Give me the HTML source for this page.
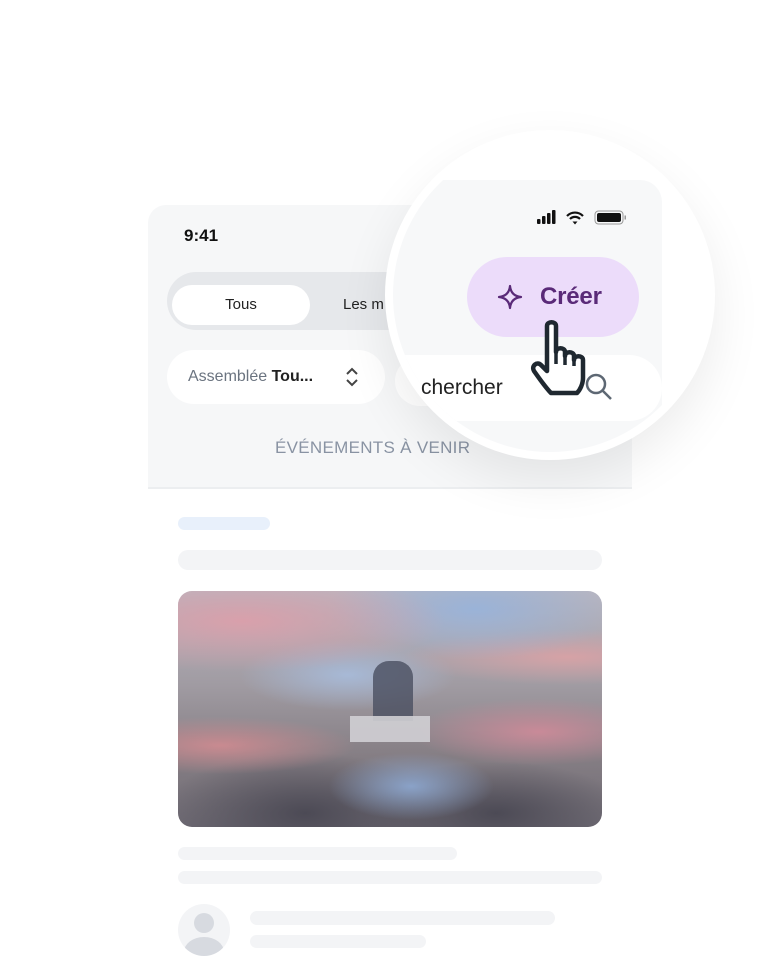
<!DOCTYPE html><html><head><style>
body{margin:0;width:780px;height:976px;background:#fff;position:relative;overflow:hidden;font-family:"Liberation Sans",sans-serif}
.a{position:absolute}
.sk{position:absolute;background:#f3f4f6;border-radius:8px}
</style></head><body>
<div class="a" style="left:148px;top:205px;width:484px;height:282px;background:#f6f7f8;border-radius:18px 18px 0 0;border-bottom:2px solid #eceef0"></div>
<div class="a" style="left:184px;top:226px;font-size:17px;font-weight:bold;color:#111">9:41</div>
<div class="a" style="left:167px;top:272px;width:278px;height:58px;background:#e6e8eb;border-radius:29px"></div>
<div class="a" style="left:172px;top:285px;width:138px;height:40px;background:#fff;border-radius:20px;text-align:center;line-height:40px;font-size:15px;color:#222">Tous</div>
<div class="a" style="left:343px;top:296px;font-size:15px;color:#222">Les m</div>
<div class="a" style="left:167px;top:350px;width:218px;height:54px;background:#fff;border-radius:27px"></div>
<div class="a" style="left:188px;top:368px;font-size:16px;color:#6b7480">Assemblée <span style="color:#222;font-weight:bold">Tou...</span></div>
<svg class="a" style="left:343px;top:366px" width="18" height="22"><path d="M4 8l5-5 5 5M4 14l5 5 5-5" stroke="#444" stroke-width="2" fill="none"/></svg>
<div class="a" style="left:395px;top:356px;width:100px;height:50px;background:#fff;border-radius:25px"></div>
<div class="a" style="left:275px;top:438px;font-size:17px;color:#8993a3;letter-spacing:.3px">ÉVÉNEMENTS À VENIR</div>
<div class="sk" style="left:178px;top:517px;width:92px;height:13px;background:#e8f0fb"></div>
<div class="sk" style="left:178px;top:550px;width:424px;height:20px;border-radius:10px"></div>
<div class="a" style="left:178px;top:591px;width:424px;height:236px;border-radius:14px;overflow:hidden;background:linear-gradient(180deg,#b9b6c0 0%,#a09ba2 40%,#857e84 70%,#6f6b74 100%)">
<div class="a" style="left:0;top:0;width:424px;height:120px;background:radial-gradient(ellipse at 15% 25%,#d9a0ab 0,transparent 40%),radial-gradient(ellipse at 70% 15%,#9ab3d8 0,transparent 35%),radial-gradient(ellipse at 92% 55%,#d6a2a6 0,transparent 30%),radial-gradient(ellipse at 40% 70%,#a7b9d6 0,transparent 30%)"></div>
<div class="a" style="left:0;top:100px;width:424px;height:136px;background:radial-gradient(ellipse at 10% 40%,#c98a90 0,transparent 25%),radial-gradient(ellipse at 55% 70%,#8aa2c8 0,transparent 25%),radial-gradient(ellipse at 85% 30%,#c98a98 0,transparent 25%),radial-gradient(ellipse at 30% 90%,#4c4a55 0,transparent 35%),radial-gradient(ellipse at 75% 90%,#4c4a55 0,transparent 30%)"></div>
<div class="a" style="left:195px;top:70px;width:40px;height:60px;background:#4a4f60;border-radius:16px 16px 0 0;opacity:.8"></div>
<div class="a" style="left:172px;top:125px;width:80px;height:26px;background:#d0cfd4;opacity:.9"></div>
</div>
<div class="sk" style="left:178px;top:847px;width:279px;height:13px;border-radius:7px"></div>
<div class="sk" style="left:178px;top:871px;width:424px;height:13px;border-radius:7px"></div>
<div class="a" style="left:178px;top:904px;width:52px;height:52px;border-radius:50%;background:#f3f4f6;overflow:hidden">
<div class="a" style="left:16px;top:9px;width:20px;height:20px;border-radius:50%;background:#d7dae0"></div>
<div class="a" style="left:6px;top:33px;width:40px;height:30px;border-radius:50%;background:#d7dae0"></div></div>
<div class="sk" style="left:250px;top:911px;width:305px;height:14px;border-radius:7px"></div>
<div class="sk" style="left:250px;top:935px;width:176px;height:13px;border-radius:7px"></div>
<!-- magnifier -->
<div class="a" style="left:385px;top:130px;width:330px;height:330px;border-radius:50%;background:#fff;box-shadow:0 20px 50px rgba(0,0,0,.08);overflow:hidden">
<div class="a" style="left:8px;top:8px;width:314px;height:314px;border-radius:50%;overflow:hidden">
<div class="a" style="left:-20px;top:42px;width:289px;height:300px;background:#f7f8f9;border-radius:0 22px 0 0"></div>
<div class="a" style="left:-20px;top:217px;width:289px;height:66px;background:#fff;border-radius:33px"></div>
</div>
<div class="a" style="left:82px;top:127px;width:172px;height:80px;background:#ecdcfa;border-radius:40px"></div>
<div class="a" style="left:155px;top:153px;font-size:24px;color:#5a2a78;font-weight:bold;letter-spacing:-.2px">Créer</div>
<svg class="a" style="left:111px;top:153px" width="28" height="28" viewBox="0 0 28 28"><path d="M14 3 Q15 13 25 14 Q15 15 14 25 Q13 15 3 14 Q13 13 14 3Z" fill="none" stroke="#5a2a78" stroke-width="2.2" stroke-linejoin="round"/></svg>
<div class="a" style="left:36px;top:246px;font-size:21px;color:#222">chercher</div>
<svg class="a" style="left:198px;top:240px" width="32" height="34"><circle cx="13" cy="14" r="9" stroke="#5d6773" stroke-width="2.5" fill="none"/><path d="M20 21l8 8" stroke="#5d6773" stroke-width="2.5"/></svg>
<svg class="a" style="left:152px;top:78px" width="106" height="20"><rect x="0" y="11" width="3.5" height="5" rx="1" fill="#111"/><rect x="5" y="8" width="3.5" height="8" rx="1" fill="#111"/><rect x="10" y="5" width="3.5" height="11" rx="1" fill="#111"/><rect x="15" y="2" width="3.5" height="14" rx="1" fill="#111"/><path d="M30 8a11 11 0 0 1 16 0M33 11a7 7 0 0 1 10 0" stroke="#111" stroke-width="2.2" fill="none"/><path d="M35.5 13.5l2.5 3 2.5-3z" fill="#111"/><rect x="58" y="3" width="28" height="13" rx="3.5" fill="none" stroke="#999" stroke-width="1"/><rect x="60" y="5" width="24" height="9" rx="2" fill="#111"/><rect x="87.5" y="7.5" width="1.5" height="4" fill="#999"/></svg>
</div>
<svg class="a" style="left:527px;top:318px" width="72" height="80" viewBox="0 0 72 80"><path d="M20 8c0-5 9-5 9 0v26c0-5 9-5 9 0v4c0-5 9-5 9 0v4c0-5 9-5 9 0v18c0 6-3 12-6 15H24c-4-4-10-12-17-22-3-5 3-10 7-6l6 6z" fill="#fff" stroke="#1f2830" stroke-width="4.5" stroke-linejoin="round"/><path d="M29 34v12M38 38v9M47 42v6" stroke="#1f2830" stroke-width="3.5"/></svg>
</body></html>
